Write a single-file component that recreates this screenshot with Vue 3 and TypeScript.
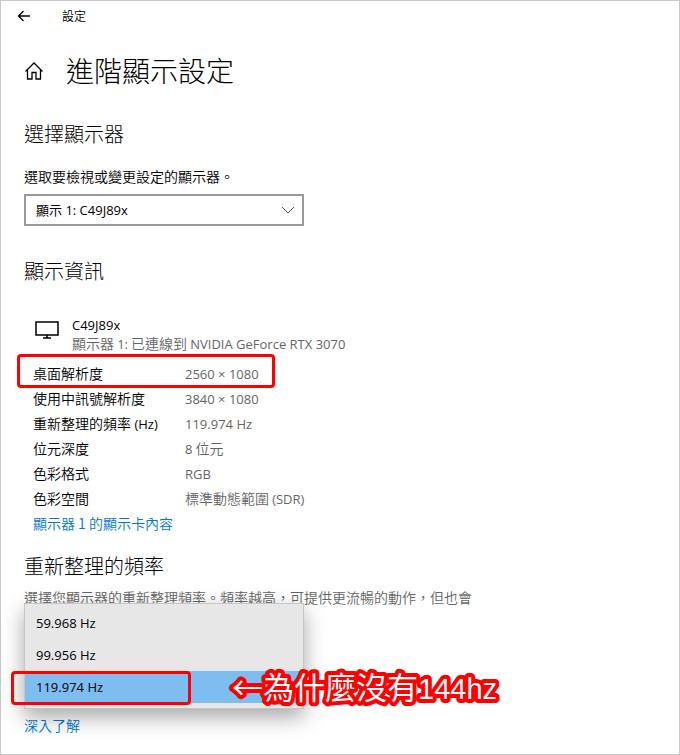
<script setup lang="ts">
import { ref } from 'vue'

interface InfoRow {
  label: string
  unit?: string
  value: string
  note?: string
  marked?: boolean
}

const rows: InfoRow[] = [
  { label: '桌面解析度', value: '2560 × 1080', marked: true },
  { label: '使用中訊號解析度', value: '3840 × 1080' },
  { label: '重新整理的頻率', unit: '(Hz)', value: '119.974 Hz' },
  { label: '位元深度', value: '8', note: '位元' },
  { label: '色彩格式', value: 'RGB' },
  { label: '色彩空間', value: '(SDR)', note: '標準動態範圍' },
]

const rates: string[] = ['59.968 Hz', '99.956 Hz', '119.974 Hz']
const selectedRate = ref('119.974 Hz')
const display = ref('1')
</script>

<template>
  <div class="window">
    <header class="titlebar">
      <button class="back" type="button" aria-label="返回">
        <svg width="14" height="12" viewBox="0 0 14 12"><path d="M13 6H1.500M6.500 1L1.500 6l5 5" /></svg>
      </button>
      <span>設定</span>
    </header>

    <main class="content">
      <div class="page-title">
        <svg class="home" width="20" height="20" viewBox="0 0 20 20">
          <path d="M1.500 11.500L10 3l8.500 8.500M3.500 10v9H8v-6.500h4V19h4.500v-9" />
        </svg>
        <h1>進階顯示設定</h1>
      </div>

      <section class="choose">
        <h2>選擇顯示器</h2>
        <label for="display">選取要檢視或變更設定的顯示器。</label>
        <div class="select-wrap">
          <select id="display" v-model="display">
            <option value="1">顯示 1: C49J89x</option>
          </select>
          <svg class="chevron" width="14" height="8" viewBox="0 0 14 8"><path d="M1 1l6 6 6-6" /></svg>
        </div>
      </section>

      <section class="info">
        <h2>顯示資訊</h2>
        <div class="device">
          <svg width="24" height="18" viewBox="0 0 24 18">
            <path d="M1 1h22v13H1zM12 14v3M8 17h8" />
          </svg>
          <div>
            <div class="device-name latin">C49J89x</div>
            <div class="device-link">顯示器 <span class="latin">1:</span> 已連線到 <span class="latin">NVIDIA GeForce RTX 3070</span></div>
          </div>
        </div>
        <table>
          <tbody>
            <tr v-for="row in rows" :key="row.label">
              <th scope="row">
                {{ row.label }}<span v-if="row.unit" class="latin">&nbsp;{{ row.unit }}</span>
                <span v-if="row.marked" class="mark row-mark"></span>
              </th>
              <td v-if="row.value === '(SDR)'">{{ row.note }} <span class="latin">{{ row.value }}</span></td>
              <td v-else><span class="latin">{{ row.value }}</span> {{ row.note }}</td>
            </tr>
          </tbody>
        </table>
        <a class="adapter" href="#adapter">顯示器 1 的顯示卡內容</a>
      </section>

      <section class="refresh">
        <h2>重新整理的頻率</h2>
        <p>選擇您顯示器的重新整理頻率。頻率越高，可提供更流暢的動作，但也會</p>
        <div class="rate-field">
          <div class="menu" role="listbox" aria-label="重新整理的頻率">
            <button
              v-for="rate in rates"
              :key="rate"
              type="button"
              role="option"
              class="latin"
              :class="{ selected: rate === selectedRate }"
              :aria-selected="rate === selectedRate"
              @click="selectedRate = rate"
            >{{ rate }}</button>
            <span class="mark rate-mark"></span>
            <svg class="callout" width="280" height="44" viewBox="0 0 280 44">
              <text x="6" y="33">←為什麼沒有<tspan class="callout-latin">144hz</tspan></text>
            </svg>
          </div>
        </div>
        <a href="#learn">深入了解</a>
      </section>
    </main>
  </div>
</template>

<style>
body {
  background: #fff;
}
</style>

<style scoped>
.window {
  box-sizing: border-box;
  min-height: 100vh;
  border: 1px solid #c8c8c8;
  overflow: hidden;
  color: #000;
  font: 14px/20px "Noto Sans CJK TC", sans-serif;
  font-weight: 350;
}
.latin {
  font-family: "Open Sans", "Noto Sans CJK TC", sans-serif;
  font-size: 13px;
  line-height: 18px;
  font-weight: 400;
}
svg {
  display: block;
  fill: none;
  stroke: #000;
}
button {
  margin: 0;
  border: 0;
  background: none;
  color: inherit;
}
.titlebar {
  display: flex;
  align-items: center;
  gap: 31px;
  height: 30px;
  padding-left: 16px;
  font-size: 12px;
}
.back {
  padding: 0;
}
.back svg {
  stroke-width: 1.3;
}
.content {
  padding: 19px 23px 0;
}
.page-title {
  display: flex;
  align-items: center;
  gap: 22px;
}
h1,
h2,
p {
  margin: 0;
  font-weight: 300;
}
h1 {
  font-size: 28px;
  line-height: 40px;
}
h2 {
  font-size: 20px;
  line-height: 28px;
}
.home {
  stroke-width: 1.3;
}
.choose {
  padding-top: 30px;
}
.choose label {
  display: block;
  padding: 18px 0 8px;
}
.select-wrap {
  position: relative;
  width: 280px;
}
select {
  display: block;
  box-sizing: border-box;
  width: 100%;
  height: 32px;
  padding: 0 30px 0 10px;
  border: 2px solid #999;
  border-radius: 0;
  appearance: none;
  background: #fff;
  color: #000;
  font: 13px/20px "Open Sans", "Noto Sans CJK TC", sans-serif;
}
.chevron {
  position: absolute;
  right: 9px;
  top: 12px;
  stroke: #555;
  pointer-events: none;
}
.info {
  padding-top: 31px;
}
.device {
  display: flex;
  gap: 13px;
  padding: 31px 0 7px 11px;
  line-height: 18px;
}
.device svg {
  margin-top: 5px;
  stroke-width: 1.5;
}
.device-link {
  color: #666;
}
table {
  border-collapse: collapse;
  margin-left: 9px;
}
tr {
  position: relative;
}
th,
td {
  height: 25px;
  padding: 0;
  text-align: left;
  font-weight: 350;
}
th {
  width: 152px;
}
td {
  color: #666;
}
a {
  color: #0078d4;
  text-decoration: none;
}
.adapter {
  display: block;
  padding: 3px 0 0 9px;
}
.refresh {
  padding-top: 19px;
}
.refresh p {
  padding-top: 7px;
  color: #666;
  font-weight: 350;
}
.rate-field {
  position: relative;
  height: 108px;
}
.menu {
  position: absolute;
  left: 0;
  top: -4px;
  box-sizing: border-box;
  width: 280px;
  padding: 3px 0 5px;
  border: 1px solid #c6c6c6;
  background: #e7e7e7;
  box-shadow: 0 8px 20px rgba(0, 0, 0, 0.35);
}
.menu button {
  display: block;
  width: 100%;
  height: 32px;
  padding: 0 11px;
  text-align: left;
}
.menu .selected {
  background: #7ebdf0;
}
.mark {
  position: absolute;
  box-sizing: border-box;
  border: 3px solid #f00;
  border-radius: 4px;
  pointer-events: none;
}
.row-mark {
  left: -16px;
  top: -6px;
  width: 258px;
  height: 34px;
}
.rate-mark {
  left: -14px;
  bottom: 3px;
  width: 180px;
  height: 34px;
}
.callout {
  position: absolute;
  left: 201px;
  bottom: -2px;
  overflow: visible;
  pointer-events: none;
}
.callout text {
  fill: #fff;
  stroke: #f00;
  stroke-width: 8px;
  stroke-linejoin: round;
  paint-order: stroke;
  font-size: 31px;
  font-weight: 400;
}
.callout-latin {
  font-family: "Liberation Sans", sans-serif;
  font-size: 29px;
}
</style>
